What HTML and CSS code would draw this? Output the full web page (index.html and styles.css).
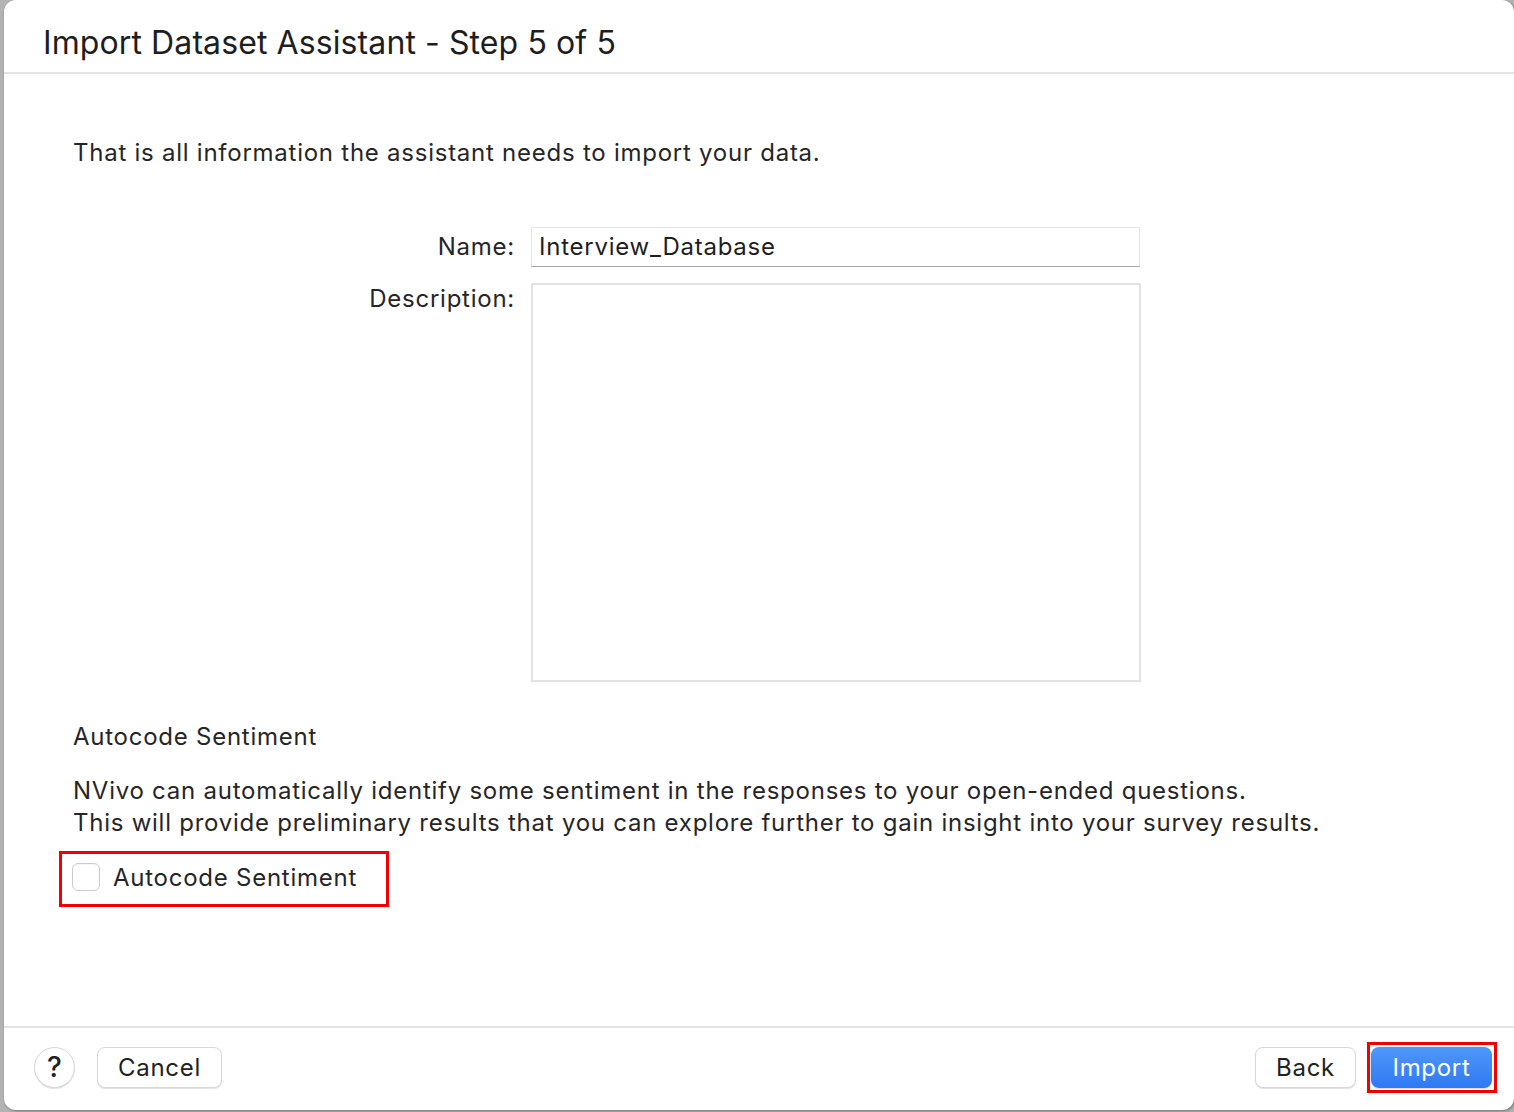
FILE: index.html
```html
<!DOCTYPE html>
<html>
<head>
<meta charset="utf-8">
<link rel="stylesheet" href="styles.css">
</head>
<body>
<div class="window">
  <div class="titlebar"><h1 class="title">Import Dataset Assistant - Step 5 of 5</h1></div>
  <div class="content">
    <p class="intro">That is all information the assistant needs to import your data.</p>
    <div class="form">
      <label class="lbl lbl-name">Name:</label>
      <div class="input">Interview_Database</div>
      <label class="lbl lbl-desc">Description:</label>
      <div class="textarea"></div>
    </div>
    <h2 class="section">Autocode Sentiment</h2>
    <p class="para">NVivo can automatically identify some sentiment in the responses to your open-ended questions.<br>This will provide preliminary results that you can explore further to gain insight into your survey results.</p>
    <div class="highlight check-box">
      <span class="checkbox"></span>
      <span class="check-label">Autocode Sentiment</span>
    </div>
  </div>
  <div class="footer">
    <button class="help">?</button>
    <button class="btn cancel">Cancel</button>
    <div class="spacer"></div>
    <button class="btn back">Back</button>
    <div class="highlight import-wrap"><button class="btn primary">Import</button></div>
  </div>
</div>
</body>
</html>
```

FILE: styles.css
```css
* { box-sizing: border-box; }
html, body { margin: 0; padding: 0; }
body {
  width: 1514px;
  height: 1112px;
  background: #b3b3b3;
  font-family: Inter, "Noto Sans", sans-serif;
  color: #262626;
  letter-spacing: 0.75px;
  overflow: hidden;
}
.window {
  margin-left: 4px;
  width: 1510px;
  height: 1110px;
  background: #ffffff;
  border-radius: 12px;
  display: flex;
  flex-direction: column;
  box-shadow: 1px 1px 3px rgba(0,0,0,0.35);
}
.titlebar {
  height: 74px;
  border-bottom: 2px solid #e4e4e4;
  padding-left: 39px;
  display: flex;
  align-items: center;
}
.title {
  margin: 0;
  font-weight: 400;
  font-size: 32px;
  letter-spacing: 0.1px;
  color: #1e1e1e;
  padding-top: 12px;
}
.content {
  flex: 1;
  padding: 64px 0 0 69px;
}
.intro {
  margin: 0;
  font-size: 24px;
  line-height: 30px;
}
.form {
  margin-top: 59px;
  display: grid;
  grid-template-columns: 442px 609px;
  column-gap: 16px;
  row-gap: 16px;
}
.lbl {
  text-align: right;
  font-size: 24px;
  line-height: 30px;
}
.lbl-name { align-self: center; }
.lbl-desc { align-self: start; padding-top: 1px; }
.input {
  height: 40px;
  border: 1px solid #e6e6e6;
  border-bottom: 1px solid #a9a9a9;
  padding-left: 7px;
  font-size: 24px;
  line-height: 38px;
  color: #1e1e1e;
}
.textarea {
  height: 399px;
  width: 610px;
  border: 2px solid #e2e2e2;
}
.section {
  margin: 40px 0 0 0;
  font-weight: 400;
  font-size: 24px;
  line-height: 30px;
}
.para {
  margin: 23px 0 0 0;
  font-size: 24px;
  line-height: 32px;
}
.highlight {
  border: 3px solid #f00000;
}
.check-box {
  margin: 12px 0 0 -14px;
  width: 330px;
  height: 56px;
  display: flex;
  align-items: center;
  padding-left: 10px;
}
.checkbox {
  width: 28px;
  height: 28px;
  border: 1px solid #cbcbcb;
  border-radius: 6px;
  background: #fff;
  box-shadow: inset 0 1px 1px rgba(0,0,0,0.04);
  margin-top: -4px;
}
.check-label {
  margin-left: 13px;
  font-size: 24px;
  line-height: 30px;
  margin-top: -2px;
}
.footer {
  height: 84px;
  border-top: 2px solid #e4e4e4;
  display: flex;
  align-items: center;
  padding: 0 17px 4px 30px;
}
.help {
  width: 41px;
  height: 41px;
  border-radius: 50%;
  border: 1px solid #d6d6d6;
  background: #fff;
  box-shadow: 0 1px 1px rgba(0,0,0,0.12);
  font-family: Inter, sans-serif;
  font-size: 28px;
  font-weight: 500;
  color: #222;
  padding: 0;
  margin-right: 22px;
}
.btn {
  height: 41px;
  border-radius: 8px;
  border: 1px solid #d8d8d8;
  background: #fff;
  box-shadow: 0 1px 1px rgba(0,0,0,0.12);
  font-family: Inter, sans-serif;
  font-size: 24px;
  letter-spacing: 0.7px;
  color: #222;
  padding: 0;
}
.cancel { width: 125px; }
.back { width: 101px; margin-right: 11px; }
.spacer { flex: 1; }
.import-wrap {
  padding: 2px 2px 2px 1px;
  display: flex;
}
.primary {
  width: 121px;
  border: none;
  background: linear-gradient(#4f97f9, #2f79f4);
  color: #fff;
  box-shadow: 0 1px 1px rgba(0,0,0,0.15);
}
```
